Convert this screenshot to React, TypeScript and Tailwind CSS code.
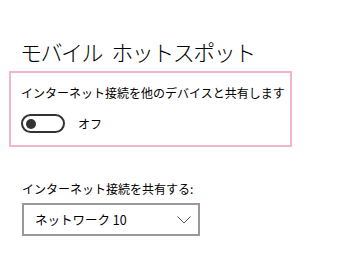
import type { FC } from 'react';

const App: FC = () => {
  return (
    <div
      className="h-[268px] w-[337px] overflow-hidden bg-white text-black"
      style={{ fontFamily: '"Noto Sans CJK JP", "Noto Sans", sans-serif' }}
    >
      <h1 className="pl-[20px] pt-[36px] text-[22px] leading-[30px] font-light tracking-[-1.5px] [word-spacing:6px]">モバイル ホットスポット</h1>

      <div className="ml-[9px] mt-[5px] h-[76px] w-[283px] border-[2.5px] border-[#f2b4cf] pl-[10px] pt-[11px]">
        <p className="whitespace-nowrap text-[12px] leading-[18px]">インターネット接続を他のデバイスと共有します</p>
        <div className="mt-[12px] flex items-center gap-[13px]">
          <div className="flex h-[19px] w-[44px] items-center rounded-full border-2 border-[#333] px-[3px]">
            <span className="h-[10px] w-[10px] rounded-full bg-[#333]" />
          </div>
          <span className="text-[12px] leading-[18px]">オフ</span>
        </div>
      </div>

      <p className="ml-[22px] mt-[33px] text-[12px] leading-[18px]">インターネット接続を共有する:</p>

      <div className="ml-[22px] mt-[5px] flex h-[33px] w-[178px] items-center justify-between border-2 border-[#999] pl-[11px] pr-[7px]">
        <span className="text-[12.5px] leading-[18px]">ネットワーク 10</span>
        <svg width="14" height="8" viewBox="0 0 14 8" fill="none" stroke="#555" strokeWidth="1">
          <path d="M0.5 0.5 L7 7 L13.5 0.5" />
        </svg>
      </div>
    </div>
  );
};

export default App;
